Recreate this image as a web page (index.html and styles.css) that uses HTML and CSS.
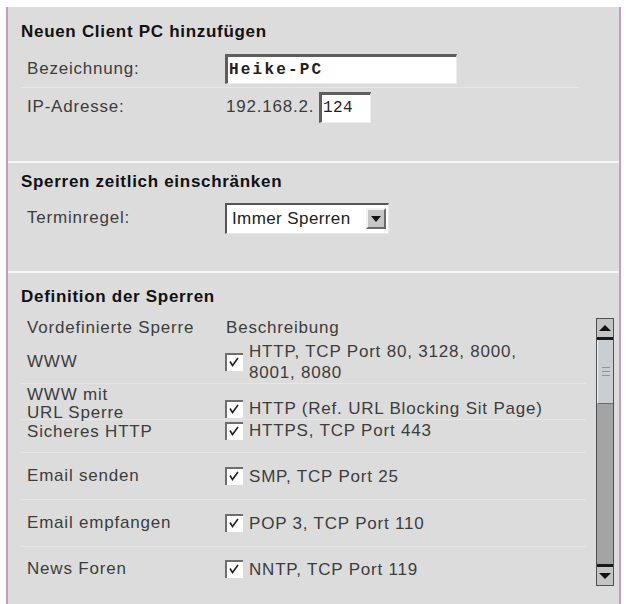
FILE: index.html
```html
<!DOCTYPE html>
<html lang="de">
<head>
<meta charset="utf-8">
<title>Neuen Client PC hinzufügen</title>
<link rel="stylesheet" href="styles.css">
</head>
<body>
<div class="panel">
  <section class="sec sec-client">
    <h2 class="title">Neuen Client PC hinzufügen</h2>
    <div class="row row-name">
      <span class="label">Bezeichnung:</span>
      <div class="input input-name">Heike-PC</div>
    </div>
    <div class="row row-ip">
      <span class="label">IP-Adresse:</span>
      <span class="ip-prefix">192.168.2.</span>
      <div class="input input-ip">124</div>
    </div>
  </section>

  <section class="sec sec-time">
    <h2 class="title">Sperren zeitlich einschränken</h2>
    <div class="row row-term">
      <span class="label">Terminregel:</span>
      <div class="select">
        <span class="select-text">Immer Sperren</span>
        <span class="select-btn"><svg width="10" height="6" viewBox="0 0 10 6"><path d="M0 0H10L5 6Z" fill="#111"/></svg></span>
      </div>
    </div>
  </section>

  <section class="sec sec-def">
    <h2 class="title">Definition der Sperren</h2>
    <div class="def-body">
      <div class="table">
        <div class="trow thead">
          <span class="label">Vordefinierte Sperre</span>
          <span class="head-desc">Beschreibung</span>
        </div>
        <div class="trow r-www">
          <span class="label">WWW</span>
          <div class="desc">
            <span class="cb"><svg width="18" height="18" viewBox="0 0 18 18"><path d="M5 8.5L7.5 12.5L13 5" fill="none" stroke="#222" stroke-width="1.6"/></svg></span>
            <span class="desc-text wrap">HTTP, TCP Port 80, 3128, 8000, 8001, 8080</span>
          </div>
        </div>
        <div class="trow r-url">
          <span class="label two">WWW mit<br>URL Sperre</span>
          <div class="desc desc-url">
            <span class="cb"><svg width="18" height="18" viewBox="0 0 18 18"><path d="M5 8.5L7.5 12.5L13 5" fill="none" stroke="#222" stroke-width="1.6"/></svg></span>
            <span class="desc-text">HTTP (Ref. URL Blocking Sit Page)</span>
          </div>
        </div>
        <div class="trow r-https">
          <span class="label">Sicheres HTTP</span>
          <div class="desc">
            <span class="cb"><svg width="18" height="18" viewBox="0 0 18 18"><path d="M5 8.5L7.5 12.5L13 5" fill="none" stroke="#222" stroke-width="1.6"/></svg></span>
            <span class="desc-text">HTTPS, TCP Port 443</span>
          </div>
        </div>
        <div class="trow r-mid">
          <span class="label">Email senden</span>
          <div class="desc">
            <span class="cb"><svg width="18" height="18" viewBox="0 0 18 18"><path d="M5 8.5L7.5 12.5L13 5" fill="none" stroke="#222" stroke-width="1.6"/></svg></span>
            <span class="desc-text">SMP, TCP Port 25</span>
          </div>
        </div>
        <div class="trow r-mid">
          <span class="label">Email empfangen</span>
          <div class="desc">
            <span class="cb"><svg width="18" height="18" viewBox="0 0 18 18"><path d="M5 8.5L7.5 12.5L13 5" fill="none" stroke="#222" stroke-width="1.6"/></svg></span>
            <span class="desc-text">POP 3, TCP Port 110</span>
          </div>
        </div>
        <div class="trow r-last">
          <span class="label">News Foren</span>
          <div class="desc">
            <span class="cb"><svg width="18" height="18" viewBox="0 0 18 18"><path d="M5 8.5L7.5 12.5L13 5" fill="none" stroke="#222" stroke-width="1.6"/></svg></span>
            <span class="desc-text">NNTP, TCP Port 119</span>
          </div>
        </div>
      </div>
      <div class="scrollbar">
        <div class="sb-btn sb-up"><svg width="12" height="6" viewBox="0 0 12 6"><path d="M0 6H12L6 0Z" fill="#111"/></svg></div>
        <div class="sb-thumb"><span class="grip"></span><span class="grip"></span><span class="grip"></span></div>
        <div class="sb-track"></div>
        <div class="sb-btn sb-down"><svg width="12" height="6" viewBox="0 0 12 6"><path d="M0 0H12L6 6Z" fill="#111"/></svg></div>
      </div>
    </div>
  </section>
</div>
</body>
</html>
```

FILE: styles.css
```css
* { box-sizing: border-box; }

html, body {
  margin: 0;
  padding: 0;
  background: #ffffff;
}

body {
  font-family: "Liberation Sans", Arial, sans-serif;
  font-size: 17px;
  color: #3c3c3c;
  letter-spacing: 0.8px;
}

.panel {
  margin: 7px 0 0 6px;
  width: 615px;
  height: 597px;
  background: #dcdcdc;
  border-left: 2px solid #c79bbb;
  border-right: 2px solid #c79bbb;
  overflow: hidden;
}

.sec {
  padding-left: 13px;
  border-bottom: 2px solid #f6f6f6;
}

.title {
  margin: 0;
  font-size: 17px;
  font-weight: bold;
  color: #111;
  letter-spacing: 0.7px;
}

.label {
  width: 204px;
  padding-left: 6px;
  flex-shrink: 0;
}

.row {
  display: flex;
  align-items: center;
}

/* Section 1 */
.sec-client {
  height: 156px;
  padding-top: 10px;
}
.sec-client .title {
  height: 30px;
  line-height: 30px;
}
.row-name {
  margin-top: 4px;
  height: 37px;
  border-bottom: 1px solid #e7e7e7;
  margin-right: 40px;
}
.row-ip {
  height: 38px;
}

.input {
  background: #fff;
  border-top: 3px solid #5e5e5e;
  border-left: 3px solid #5e5e5e;
  border-right: 1px solid #ececec;
  border-bottom: 1px solid #ececec;
  font-family: "Liberation Mono", "Courier New", monospace;
  color: #222;
}
.input-name {
  width: 232px;
  height: 30px;
  line-height: 26px;
  padding-left: 1px;
  font-size: 16px;
  font-weight: bold;
  letter-spacing: 2.2px;
}
.ip-prefix {
  width: 94px;
  padding-left: 1px;
  flex-shrink: 0;
}
.input-ip {
  width: 52px;
  height: 31px;
  line-height: 27px;
  padding-left: 1px;
  font-size: 16px;
  letter-spacing: 0.4px;
}

/* Section 2 */
.sec-time {
  height: 110px;
  padding-top: 6px;
}
.sec-time .title {
  height: 26px;
  line-height: 26px;
}
.row-term {
  margin-top: 5px;
  height: 36px;
}
.select {
  display: flex;
  align-items: center;
  width: 164px;
  height: 31px;
  background: #fff;
  border-top: 2px solid #555;
  border-left: 2px solid #555;
  border-right: 1px solid #e8e8e8;
  border-bottom: 1px solid #e8e8e8;
  padding-left: 5px;
}
.select-text {
  flex: 1;
  color: #222;
  letter-spacing: 0.4px;
}
.select-btn {
  width: 20px;
  height: 21px;
  margin-right: 2px;
  background: #c6c6c6;
  border-top: 2px solid #f2f2f2;
  border-left: 2px solid #f2f2f2;
  border-right: 2px solid #6a6a6a;
  border-bottom: 2px solid #6a6a6a;
  display: flex;
  align-items: center;
  justify-content: center;
  flex-shrink: 0;
}

/* Section 3 */
.sec-def {
  height: 331px;
  padding-top: 10px;
  border-bottom: none;
}
.sec-def .title {
  height: 28px;
  line-height: 28px;
}
.def-body {
  margin-top: 5px;
  display: flex;
  align-items: flex-start;
}
.table {
  flex: 1;
}
.trow {
  display: flex;
  align-items: center;
  border-bottom: 1px solid #e6e6e6;
  margin-right: 10px;
}
.thead {
  height: 24px;
  border-bottom: none;
}
.head-desc {
  padding-left: 1px;
}
.desc {
  display: flex;
  align-items: center;
}
.cb {
  width: 18px;
  height: 18px;
  background: #fff;
  border-top: 2px solid #6e6e6e;
  border-left: 2px solid #6e6e6e;
  flex-shrink: 0;
  margin-right: 6px;
  display: flex;
}
.cb svg {
  margin: -2px 0 0 -2px;
}
.desc-text {
  line-height: 21px;
}
.desc-text.wrap {
  max-width: 305px;
}
.r-www {
  height: 44px;
}
.r-url {
  height: 36px;
  align-items: flex-start;
}
.label.two {
  line-height: 18px;
  padding-top: 2px;
}
.desc-url {
  margin-top: 14px;
}
.r-https {
  height: 33px;
  align-items: flex-start;
}
.r-https .label {
  padding-top: 2px;
  line-height: 19px;
}
.r-mid {
  height: 47px;
}
.r-last {
  height: 44px;
  border-bottom: none;
}

.scrollbar {
  margin-top: 2px;
  margin-right: 5px;
  width: 18px;
  height: 268px;
  border: 1px solid #505050;
  background: #a4a4a4;
  display: flex;
  flex-direction: column;
  flex-shrink: 0;
}
.sb-btn {
  height: 21px;
  background: #c4c4c4;
  display: flex;
  align-items: center;
  justify-content: center;
  flex-shrink: 0;
}
.sb-up {
  border-bottom: 3px solid #1a1a1a;
}
.sb-down {
  border-top: 3px solid #1a1a1a;
}
.sb-thumb {
  height: 64px;
  background: #c9ced2;
  border-left: 1px solid #eef0f2;
  border-bottom: 1px solid #6e6e6e;
  display: flex;
  flex-direction: column;
  align-items: center;
  justify-content: center;
  gap: 3px;
}
.grip {
  width: 8px;
  height: 1px;
  background: #8f959a;
}
.sb-track {
  flex: 1;
  background: #a4a4a4;
}
```
